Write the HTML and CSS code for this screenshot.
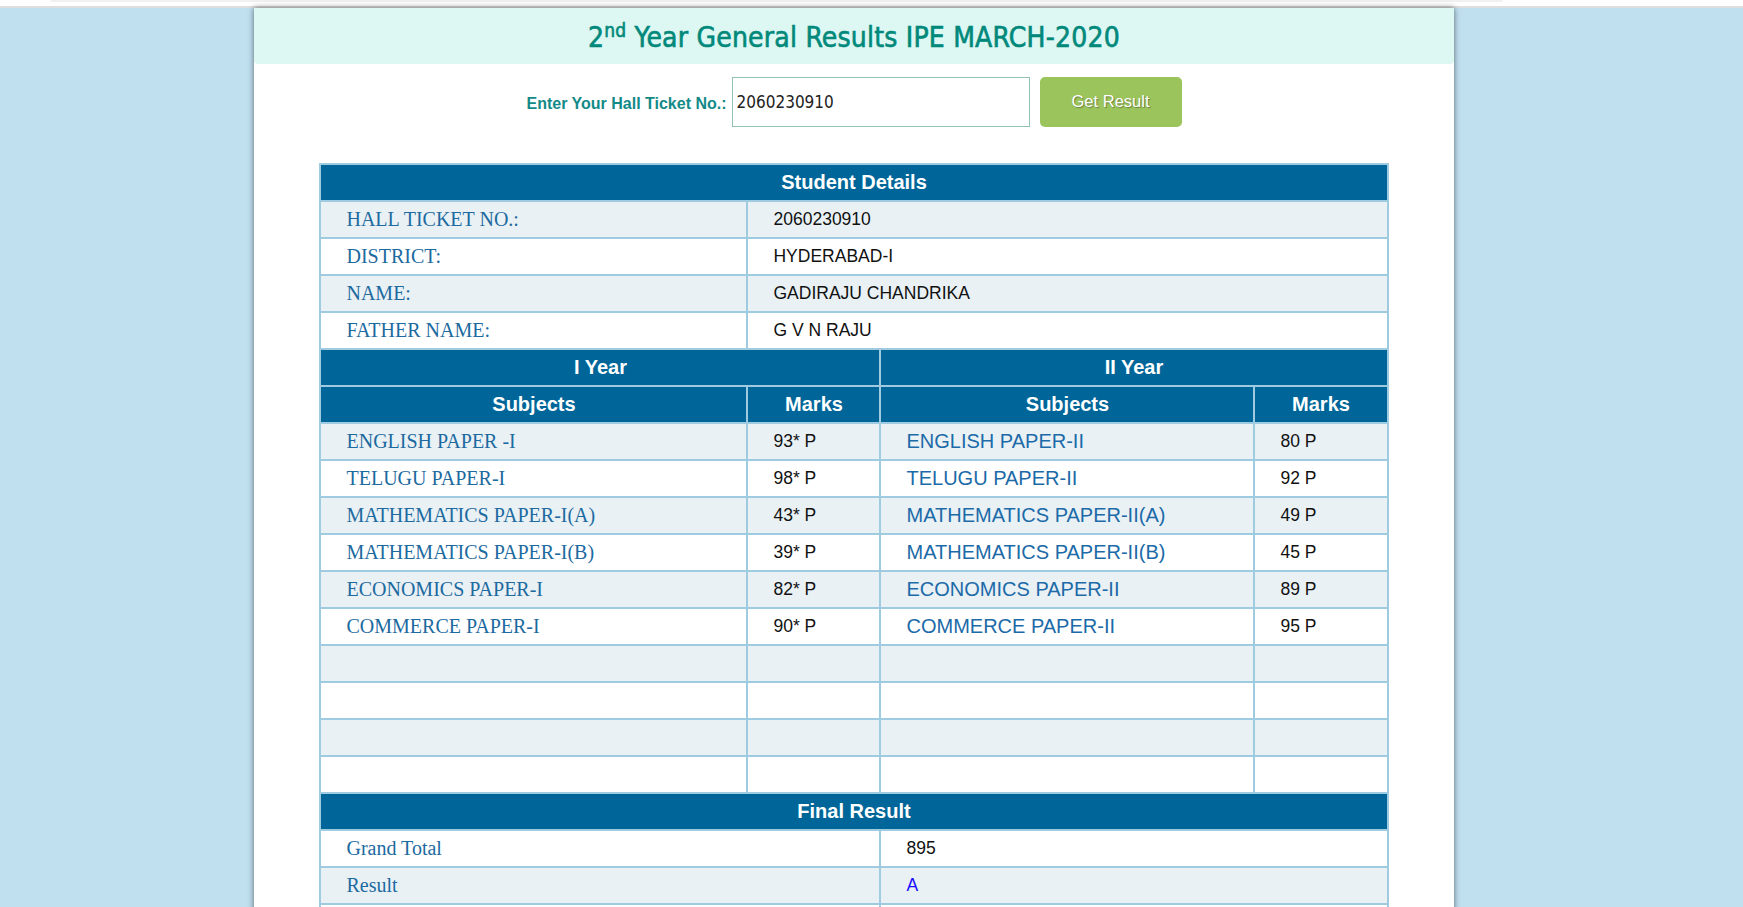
FILE: index.html
```html
<!DOCTYPE html>
<html lang="en">
<head>
<meta charset="utf-8">
<title>2nd Year General Results IPE MARCH-2020</title>
<link rel="stylesheet" href="styles.css">
</head>
<body>
<div class="topbar"><div class="topbar-line"></div></div>
<div class="page">
  <div class="container">
    <div class="banner">
      <h1 class="title">2<sup>nd</sup> Year General Results IPE MARCH-2020</h1>
    </div>
    <form class="search">
      <label class="search-label" for="htno">Enter Your Hall Ticket No.:</label>
      <input class="search-input" id="htno" type="text" value="2060230910">
      <button class="search-btn" type="button">Get Result</button>
    </form>
    <table class="results">
      <colgroup>
        <col class="c1"><col class="c2"><col class="c3"><col class="c4">
      </colgroup>
      <tr><th colspan="4">Student Details</th></tr>
      <tr class="alt"><td class="lbl">HALL TICKET NO.:</td><td colspan="3" class="val">2060230910</td></tr>
      <tr><td class="lbl">DISTRICT:</td><td colspan="3" class="val">HYDERABAD-I</td></tr>
      <tr class="alt"><td class="lbl">NAME:</td><td colspan="3" class="val">GADIRAJU CHANDRIKA</td></tr>
      <tr><td class="lbl">FATHER NAME:</td><td colspan="3" class="val">G V N RAJU</td></tr>
      <tr><th colspan="2">I Year</th><th colspan="2">II Year</th></tr>
      <tr><th>Subjects</th><th>Marks</th><th>Subjects</th><th>Marks</th></tr>
      <tr class="alt"><td class="lbl">ENGLISH PAPER -I</td><td class="val">93* P</td><td class="sub2">ENGLISH PAPER-II</td><td class="val">80 P</td></tr>
      <tr><td class="lbl">TELUGU PAPER-I</td><td class="val">98* P</td><td class="sub2">TELUGU PAPER-II</td><td class="val">92 P</td></tr>
      <tr class="alt"><td class="lbl">MATHEMATICS PAPER-I(A)</td><td class="val">43* P</td><td class="sub2">MATHEMATICS PAPER-II(A)</td><td class="val">49 P</td></tr>
      <tr><td class="lbl">MATHEMATICS PAPER-I(B)</td><td class="val">39* P</td><td class="sub2">MATHEMATICS PAPER-II(B)</td><td class="val">45 P</td></tr>
      <tr class="alt"><td class="lbl">ECONOMICS PAPER-I</td><td class="val">82* P</td><td class="sub2">ECONOMICS PAPER-II</td><td class="val">89 P</td></tr>
      <tr><td class="lbl">COMMERCE PAPER-I</td><td class="val">90* P</td><td class="sub2">COMMERCE PAPER-II</td><td class="val">95 P</td></tr>
      <tr class="alt"><td></td><td></td><td></td><td></td></tr>
      <tr><td></td><td></td><td></td><td></td></tr>
      <tr class="alt"><td></td><td></td><td></td><td></td></tr>
      <tr><td></td><td></td><td></td><td></td></tr>
      <tr><th colspan="4">Final Result</th></tr>
      <tr><td colspan="2" class="lbl">Grand Total</td><td colspan="2" class="val">895</td></tr>
      <tr class="alt"><td colspan="2" class="lbl">Result</td><td colspan="2" class="val grade">A</td></tr>
      <tr><td colspan="2" class="lbl">&nbsp;</td><td colspan="2" class="val">&nbsp;</td></tr>
    </table>
  </div>
</div>
</body>
</html>
```

FILE: styles.css
```css
html, body {
  margin: 0;
  padding: 0;
}

body {
  background: #c0e0f0;
  font-family: "Liberation Sans", Arial, sans-serif;
  overflow: hidden;
}

.topbar {
  height: 6px;
  background: #ffffff;
  border-bottom: 2px solid #dedede;
  padding: 0 240px 0 50px;
}

.topbar-line {
  height: 2px;
  background: #f1f1f1;
  border-radius: 0 0 4px 4px;
}

.page {
  display: flex;
  justify-content: center;
  padding-right: 35px;
}

.container {
  width: 1200px;
  min-height: 920px;
  background: #ffffff;
  box-shadow: 0 0 6px rgba(0, 0, 0, 0.55);
}

.banner {
  height: 56px;
  background: #ddf7f3;
  border-radius: 0 0 4px 4px;
  display: flex;
  align-items: center;
  justify-content: center;
}

.title {
  margin: 0;
  font-family: "DejaVu Sans Condensed", "DejaVu Sans", sans-serif;
  font-weight: normal;
  font-size: 28px;
  color: #00897b;
  -webkit-text-stroke: 0.6px #00897b;
  letter-spacing: 0.2px;
  padding-top: 2px;
}

.title sup {
  font-size: 19px;
  vertical-align: 10px;
  line-height: 0;
}

.search {
  display: flex;
  justify-content: center;
  align-items: center;
  margin: 13px 0 0;
  height: 50px;
}

.search-label {
  font-weight: bold;
  font-size: 16px;
  color: #128a88;
  margin-right: 5px;
  padding-top: 3px;
}

.search-input {
  box-sizing: border-box;
  width: 298px;
  height: 50px;
  border: 1px solid #93c2b2;
  padding: 0 4px;
  font-family: "DejaVu Sans Condensed", "DejaVu Sans", sans-serif;
  font-size: 17px;
  color: #222;
  margin: 0;
  outline: none;
}

.search-btn {
  box-sizing: border-box;
  width: 142px;
  height: 50px;
  margin: 0 0 0 10px;
  border: none;
  border-radius: 5px;
  background: #9cc45d;
  color: #ffffff;
  font-family: "Liberation Sans", Arial, sans-serif;
  font-size: 16.5px;
  text-shadow: 1px 1px 1px rgba(0, 0, 0, 0.35);
  padding: 0 0 2px;
}

.results {
  width: 1067px;
  margin: 36px auto 0;
  border-collapse: collapse;
  table-layout: fixed;
  border: 2px solid #9fcbe1;
}

.c1 { width: 427px; }
.c2 { width: 133px; }
.c3 { width: 374px; }
.c4 { width: 133px; }

.results tr {
  height: 37px;
  background: #ffffff;
}

.results tr.alt {
  background: #e9f1f5;
}

.results th,
.results td {
  border: 2px solid #9fcbe1;
  padding: 0 0 0 25px;
  height: 37px;
  box-sizing: border-box;
}

.results th {
  background: #006699;
  color: #ffffff;
  font-family: "Liberation Sans", Arial, sans-serif;
  font-weight: bold;
  font-size: 20px;
  text-align: center;
  padding: 0;
}

.lbl {
  font-family: "Liberation Serif", "Times New Roman", serif;
  font-size: 20px;
  color: #1c6aa0;
}

.val {
  font-family: "Liberation Sans", Arial, sans-serif;
  font-size: 17.5px;
  color: #111111;
}

.sub2 {
  font-family: "Liberation Sans", Arial, sans-serif;
  font-size: 20px;
  color: #1c6aa8;
  padding-left: 24px;
}

.grade {
  color: #1a0dff;
}
```
